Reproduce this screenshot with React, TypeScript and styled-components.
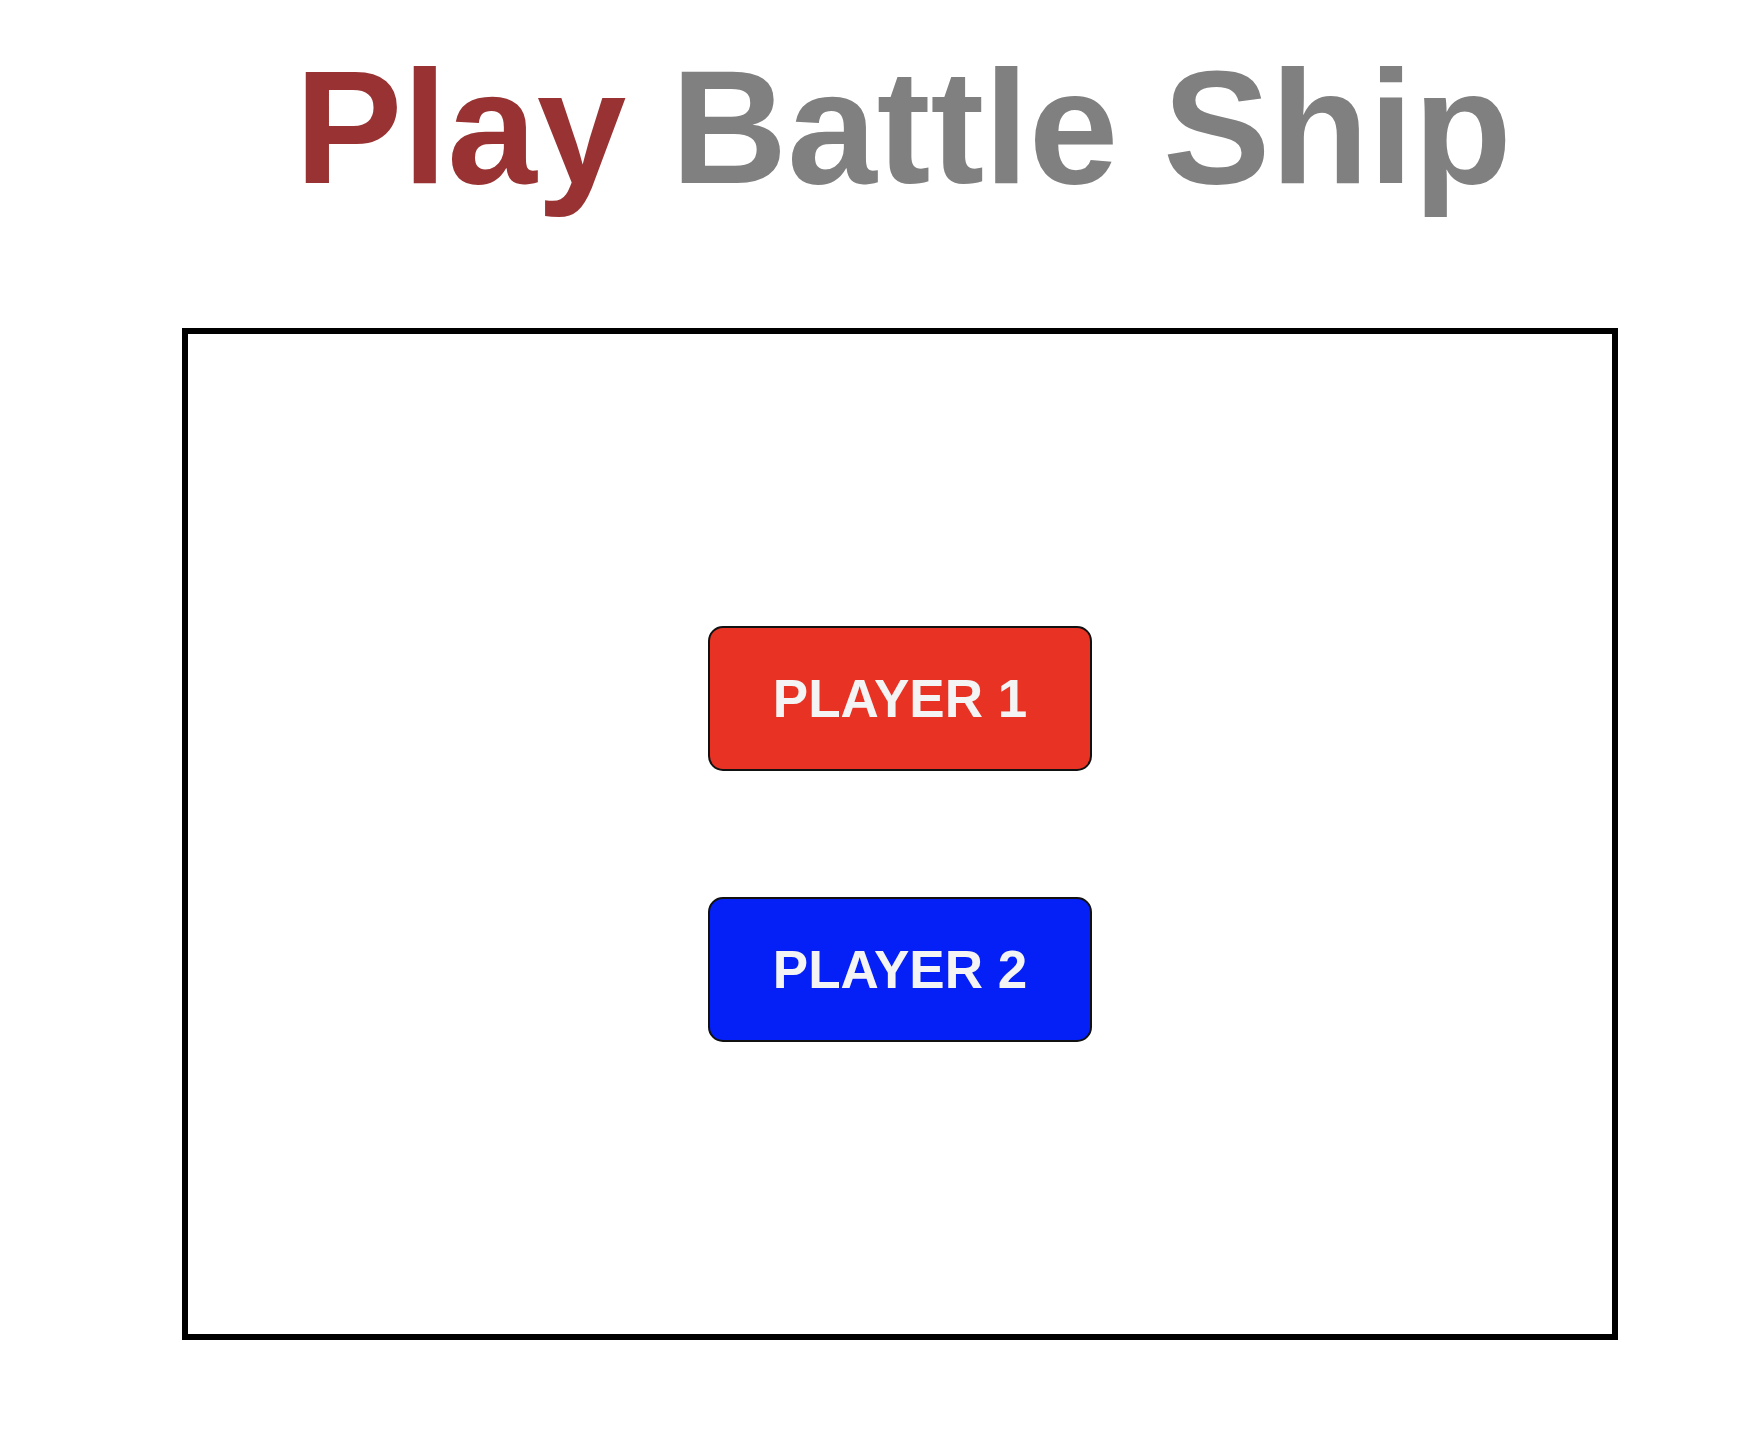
import styled, { createGlobalStyle } from "styled-components";

const GlobalStyle = createGlobalStyle`
  body {
    margin: 0;
    background: #fff;
    font-family: "Liberation Sans", Arial, sans-serif;
  }
`;

const Page = styled.div`
  width: 1436px;
  margin-left: 182px;
  padding-top: 47px;
  padding-bottom: 90px;
`;

const Title = styled.h1`
  margin: 0;
  height: 161px;
  padding-left: 7px;
  text-align: center;
  font-size: 161px;
  line-height: 1;
  font-weight: 700;
  color: #808080;
  white-space: nowrap;
`;

const Accent = styled.span`
  color: #993333;
`;

const Board = styled.div`
  box-sizing: border-box;
  margin-top: 120px;
  height: 1012px;
  border: 6px solid #000;
  display: flex;
  flex-direction: column;
  align-items: center;
  justify-content: center;
  gap: 126px;
`;

const PlayerButton = styled.button<{ $color: string }>`
  box-sizing: border-box;
  width: 384px;
  height: 145px;
  border: 2px solid #111;
  border-radius: 15px;
  background-color: ${(p) => p.$color};
  color: #f4f4f4;
  font-family: "Liberation Sans", Arial, sans-serif;
  font-size: 53px;
  font-weight: 700;
  cursor: pointer;
  padding: 0;
`;

export default function App() {
  return (
    <>
      <GlobalStyle />
      <Page>
        <Title>
          <Accent>Play</Accent> Battle Ship
        </Title>
        <Board>
          <PlayerButton $color="#e83324">PLAYER 1</PlayerButton>
          <PlayerButton $color="#0520f6">PLAYER 2</PlayerButton>
        </Board>
      </Page>
    </>
  );
}
